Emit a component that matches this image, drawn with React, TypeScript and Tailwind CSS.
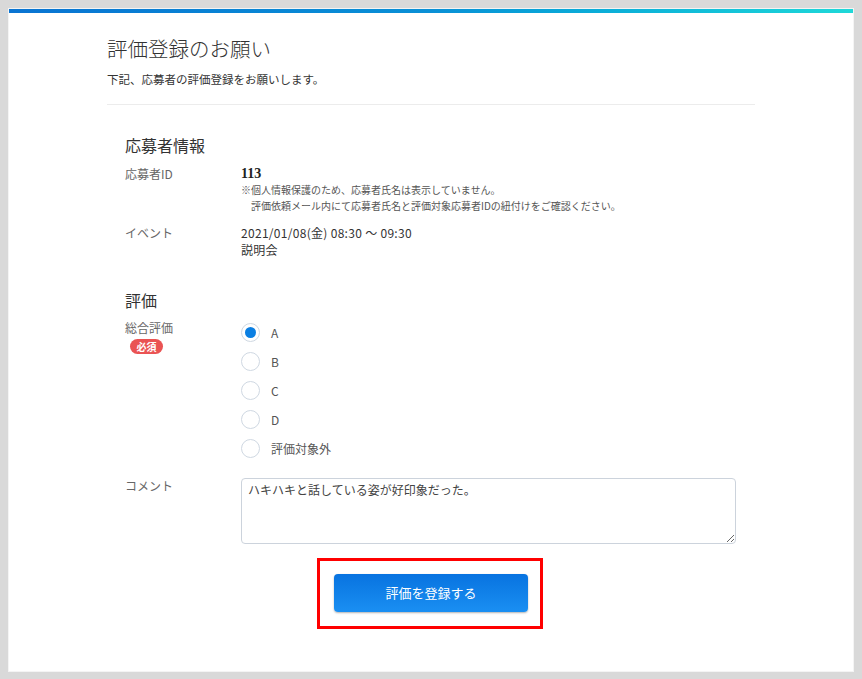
import { useState } from 'react'

const options = ['A', 'B', 'C', 'D', '評価対象外']

export default function App() {
  const [rating, setRating] = useState('A')
  const [comment, setComment] = useState('ハキハキと話している姿が好印象だった。')

  return (
    <main
      className="min-h-screen bg-[#d9d9d9] p-[8px] text-[#333]"
      style={{ fontFamily: '"Noto Sans CJK JP", "Noto Sans", sans-serif' }}
    >
      <div className="bg-white border border-[#f4f4f4] pb-[42px]">
        {/* barra superior */}
        <div className="h-[4px] bg-gradient-to-r from-[#0a74d2] via-[#0a90d6] to-[#1fd8d8]" />

        <div className="mx-auto w-[648px] pt-[21px]">
          <h1 className="text-[20.5px] leading-[28px] font-light text-[#333]">評価登録のお願い</h1>
          <p className="mt-[8px] text-[11.5px] leading-[18px] text-[#333]">下記、応募者の評価登録をお願いします。</p>
          <hr className="mt-[16px] border-[#ececec]" />

          <div className="pl-[18px] pr-[19px]">
            {/* 応募者情報 */}
            <h2 className="mt-[28px] text-[16px] leading-[24px] text-[#333]">応募者情報</h2>

            <div className="mt-[9px] flex">
              <div className="w-[116px] text-[12px] leading-[16px] text-[#666]">応募者ID</div>
              <div>
                <div className="text-[14px] leading-[16px] font-bold text-[#222]" style={{ fontFamily: '"Liberation Serif", serif' }}>113</div>
                <p className="text-[10px] leading-[16px] text-[#555]">※個人情報保護のため、応募者氏名は表示していません。</p>
                <p className="pl-[10px] text-[10px] leading-[16px] text-[#555]">評価依頼メール内にて応募者氏名と評価対象応募者IDの紐付けをご確認ください。</p>
              </div>
            </div>

            <div className="mt-[10px] flex">
              <div className="w-[116px] text-[12px] leading-[17px] text-[#666]">イベント</div>
              <div className="text-[12px] leading-[17px] text-[#333] tracking-[0.3px]">
                <div>2021/01/08(金) 08:30 ～ 09:30</div>
                <div>説明会</div>
              </div>
            </div>

            {/* 評価 */}
            <h2 className="mt-[30px] text-[16px] leading-[24px] text-[#333]">評価</h2>

            <div className="mt-[7px] flex">
              <div className="w-[116px]">
                <div className="text-[12px] leading-[17px] text-[#666]">総合評価</div>
                <div className="ml-[5px] mt-[3px] flex h-[15px] w-[33px] items-center justify-center rounded-full bg-[#ea5353] text-[10px] font-bold leading-none text-white">
                  必須
                </div>
              </div>
              <div className="-mt-[1px]">
                {options.map(opt => (
                  <label key={opt} className="flex h-[29px] cursor-pointer items-center gap-[11px]">
                    <span className="flex h-[19px] w-[19px] items-center justify-center rounded-full border border-[#cfd8e2] bg-white">
                      {rating === opt && <span className="h-[11px] w-[11px] rounded-full bg-[#0b7fe2]" />}
                    </span>
                    <input
                      type="radio"
                      name="rating"
                      className="hidden"
                      checked={rating === opt}
                      onChange={() => setRating(opt)}
                    />
                    <span className="text-[12px] text-[#555]">{opt}</span>
                  </label>
                ))}
              </div>
            </div>

            <div className="mt-[15px] flex">
              <div className="w-[116px] text-[12px] leading-[15px] text-[#666]">コメント</div>
              <textarea
                value={comment}
                onChange={e => setComment(e.target.value)}
                className="h-[66px] w-[495px] rounded-[4px] border border-[#ccd3dc] px-[6px] py-[2px] text-[12px] leading-[18px] text-[#444] outline-none"
              />
            </div>

            <div className="mt-[14px] flex justify-center pr-[1px]">
              <div className="border-[3px] border-[#ff0000] pt-[13px] pb-[14px] pl-[14px] pr-[12px]">
                <button
                  type="button"
                  className="h-[38px] w-[194px] rounded-[4px] bg-gradient-to-b from-[#0873e0] to-[#1a8ff2] text-[13px] text-white shadow-[0_1px_2px_rgba(0,0,0,0.3)]"
                >
                  評価を登録する
                </button>
              </div>
            </div>
          </div>
        </div>
      </div>
    </main>
  )
}
